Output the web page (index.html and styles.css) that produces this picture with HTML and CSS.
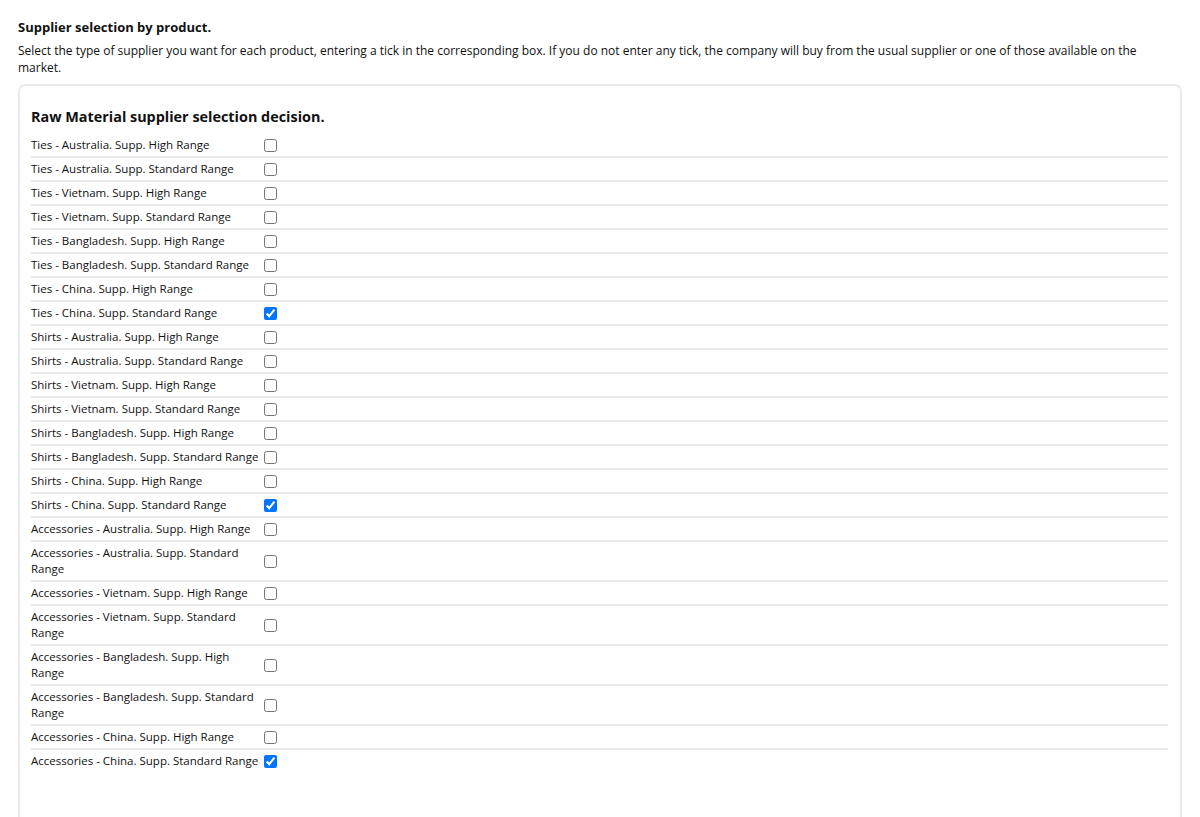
FILE: index.html
```html
<!DOCTYPE html>
<html lang="en">
<head>
    <meta charset="UTF-8">
    <title>Supplier selection by product</title>
    <link rel="stylesheet" href="styles.css">
</head>
<body>
    <div class="page">
        <h3 class="title">Supplier selection by product.</h3>
        <p class="intro">Select the type of supplier you want for each product, entering a tick in the corresponding box. If you do not enter any tick, the company will buy from the usual supplier or one of those available on the market.</p>

        <div class="card">
            <h4 class="card-title">Raw Material supplier selection decision.</h4>
            <div class="rows">
                <label class="row"><span class="name">Ties - Australia. Supp. High Range</span><span class="box"><input type="checkbox"></span></label>
                <label class="row"><span class="name">Ties - Australia. Supp. Standard Range</span><span class="box"><input type="checkbox"></span></label>
                <label class="row"><span class="name">Ties - Vietnam. Supp. High Range</span><span class="box"><input type="checkbox"></span></label>
                <label class="row"><span class="name">Ties - Vietnam. Supp. Standard Range</span><span class="box"><input type="checkbox"></span></label>
                <label class="row"><span class="name">Ties - Bangladesh. Supp. High Range</span><span class="box"><input type="checkbox"></span></label>
                <label class="row"><span class="name">Ties - Bangladesh. Supp. Standard Range</span><span class="box"><input type="checkbox"></span></label>
                <label class="row"><span class="name">Ties - China. Supp. High Range</span><span class="box"><input type="checkbox"></span></label>
                <label class="row"><span class="name">Ties - China. Supp. Standard Range</span><span class="box"><input type="checkbox" checked></span></label>
                <label class="row"><span class="name">Shirts - Australia. Supp. High Range</span><span class="box"><input type="checkbox"></span></label>
                <label class="row"><span class="name">Shirts - Australia. Supp. Standard Range</span><span class="box"><input type="checkbox"></span></label>
                <label class="row"><span class="name">Shirts - Vietnam. Supp. High Range</span><span class="box"><input type="checkbox"></span></label>
                <label class="row"><span class="name">Shirts - Vietnam. Supp. Standard Range</span><span class="box"><input type="checkbox"></span></label>
                <label class="row"><span class="name">Shirts - Bangladesh. Supp. High Range</span><span class="box"><input type="checkbox"></span></label>
                <label class="row"><span class="name">Shirts - Bangladesh. Supp. Standard Range</span><span class="box"><input type="checkbox"></span></label>
                <label class="row"><span class="name">Shirts - China. Supp. High Range</span><span class="box"><input type="checkbox"></span></label>
                <label class="row"><span class="name">Shirts - China. Supp. Standard Range</span><span class="box"><input type="checkbox" checked></span></label>
                <label class="row"><span class="name">Accessories - Australia. Supp. High Range</span><span class="box"><input type="checkbox"></span></label>
                <label class="row"><span class="name">Accessories - Australia. Supp. Standard Range</span><span class="box"><input type="checkbox"></span></label>
                <label class="row"><span class="name">Accessories - Vietnam. Supp. High Range</span><span class="box"><input type="checkbox"></span></label>
                <label class="row"><span class="name">Accessories - Vietnam. Supp. Standard Range</span><span class="box"><input type="checkbox"></span></label>
                <label class="row"><span class="name">Accessories - Bangladesh. Supp. High Range</span><span class="box"><input type="checkbox"></span></label>
                <label class="row"><span class="name">Accessories - Bangladesh. Supp. Standard Range</span><span class="box"><input type="checkbox"></span></label>
                <label class="row"><span class="name">Accessories - China. Supp. High Range</span><span class="box"><input type="checkbox"></span></label>
                <label class="row"><span class="name">Accessories - China. Supp. Standard Range</span><span class="box"><input type="checkbox" checked></span></label>
            </div>
        </div>
    </div>
</body>
</html>
```

FILE: styles.css
```css
body {
    margin: 0;
    font-family: "Open Sans", "Noto Sans", sans-serif;
    color: #111;
    background-color: #fff;
}

.page {
    padding: 17px 18px 0 18px;
}

.title {
    font-size: 13px;
    font-weight: 700;
    line-height: 20px;
    margin: 0 0 5px 0;
}

.intro {
    font-size: 12px;
    line-height: 17px;
    margin: 0 0 8px 0;
}

.card {
    border: 2px solid #e9e9ee;
    border-bottom: none;
    border-radius: 7px 7px 0 0;
    padding: 21px 12px 70px 11px;
}

.card-title {
    font-size: 14.4px;
    font-weight: 700;
    line-height: 20px;
    margin: 0 0 7px 0;
}

.row {
    display: grid;
    grid-template-columns: 230px auto;
    column-gap: 1px;
    align-items: center;
    font-size: 11.5px;
    line-height: 16px;
    padding: 3px 0;
    border-bottom: 2px solid #e9e9ee;
}

.row:last-child {
    border-bottom: none;
}

.box {
    display: flex;
    align-items: center;
}

.box input {
    margin: 0 0 0 2px;
    width: 13px;
    height: 13px;
}
```
